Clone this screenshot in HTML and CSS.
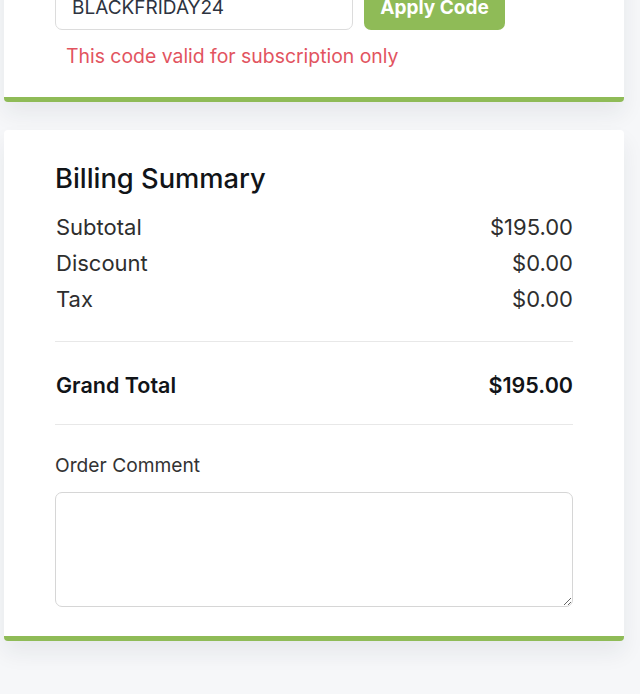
FILE: index.html
```html
<!DOCTYPE html>
<html lang="en">
<head>
<meta charset="utf-8">
<title>Billing Summary</title>
<link rel="stylesheet" href="styles.css">
</head>
<body>
<main class="page">
  <section class="card card-coupon">
    <div class="coupon-row">
      <input class="coupon-input" type="text" value="BLACKFRIDAY24">
      <button class="btn-apply" type="button">Apply Code</button>
    </div>
    <p class="coupon-error">This code valid for subscription only</p>
  </section>

  <section class="card card-summary">
    <h2 class="summary-title">Billing Summary</h2>
    <div class="summary-lines">
      <div class="line"><span>Subtotal</span><span>$195.00</span></div>
      <div class="line"><span>Discount</span><span>$0.00</span></div>
      <div class="line"><span>Tax</span><span>$0.00</span></div>
    </div>
    <div class="line line-total"><span>Grand Total</span><span>$195.00</span></div>
    <label class="comment-label" for="comment">Order Comment</label>
    <textarea id="comment" class="comment-box"></textarea>
  </section>
</main>
</body>
</html>
```

FILE: styles.css
```css
* { box-sizing: border-box; }
html, body {
  margin: 0;
  padding: 0;
  background: #f6f7f9;
  font-family: Inter, "Noto Sans", "Liberation Sans", sans-serif;
  color: #2b2b2b;
}
.page {
  padding: 0 16px 60px 4px;
  display: flex;
  flex-direction: column;
  gap: 28px;
}
.card {
  background: #ffffff;
  border-bottom: 5px solid #8fbb57;
  border-radius: 4px;
  box-shadow: 0 12px 22px rgba(30, 40, 60, 0.07);
  padding: 0 51px;
}
.card-coupon {
  margin-top: -40px;
  padding-top: 24px;
  padding-bottom: 31px;
}
.coupon-row {
  display: flex;
  gap: 11px;
}
.coupon-input {
  width: 298px;
  height: 46px;
  border: 1.5px solid #dcdcdc;
  border-radius: 7px;
  padding: 0 16px;
  font-family: inherit;
  font-size: 19px;
  color: #2d3340;
  background: #fff;
}
.btn-apply {
  width: 141px;
  height: 46px;
  border: none;
  border-radius: 7px;
  background: #8fbb57;
  color: #ffffff;
  font-family: inherit;
  font-size: 19px;
  font-weight: 700;
  padding: 0;
}
.coupon-error {
  margin: 16px 0 0 11px;
  font-size: 19.4px;
  line-height: 20px;
  color: #e2545f;
}
.card-summary {
  padding-top: 33px;
  padding-bottom: 29px;
}
.summary-title {
  margin: 0 0 14px 0;
  font-size: 27.3px;
  line-height: 32px;
  font-weight: 500;
  color: #111418;
}
.summary-lines {
  padding-bottom: 24px;
  border-bottom: 1.5px solid #e8e8e8;
}
.line {
  display: flex;
  justify-content: space-between;
  font-size: 22px;
  line-height: 36px;
  color: #2e2e2e;
  padding-left: 1px;
}
.line-total {
  font-size: 21.5px;
  font-weight: 600;
  color: #111418;
  padding: 25px 0 21px 1px;
  border-bottom: 1.5px solid #e8e8e8;
}
.comment-label {
  display: block;
  margin-top: 28px;
  font-size: 19.2px;
  line-height: 24px;
  color: #333;
}
.comment-box {
  display: block;
  width: 100%;
  height: 115px;
  margin-top: 15px;
  border: 1.5px solid #d6d6d6;
  border-radius: 7px;
  resize: vertical;
  font-family: inherit;
  font-size: 16px;
}
```
